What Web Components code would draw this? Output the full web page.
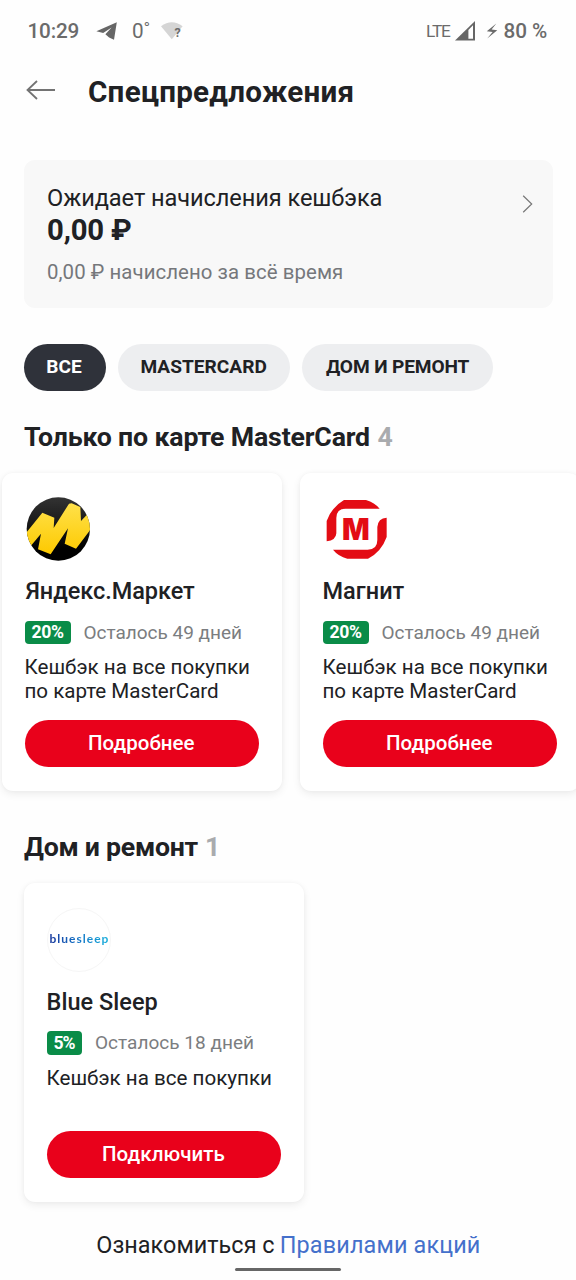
<!DOCTYPE html>
<html lang="ru">
<head>
<meta charset="utf-8">
<meta name="viewport" content="width=device-width">
<title>Спецпредложения</title>
<style>
html, body { margin: 0; background: #fefefe; }
body { width: 576px; height: 1280px; overflow: hidden; font-family: Roboto, "Noto Sans", sans-serif; color: #202124; }
</style>
</head>
<body>
<offers-page></offers-page>
<script>
const define = (name, html, connect) => {
  const tpl = document.createElement('template');
  tpl.innerHTML = html.trim();
  customElements.define(name, class extends HTMLElement {
    constructor() {
      super();
      this.attachShadow({ mode: 'open' }).append(tpl.content.cloneNode(true));
    }
    connectedCallback() { if (connect) connect(this, this.shadowRoot); }
  });
};

/* One line of text whose inked width is tracked to the "w" attribute. */
const pen = document.createElement('canvas').getContext('2d');
define('ui-text', `
<style>
:host { display: block; flex: none; }
span { display: block; width: max-content; white-space: pre; }
</style><span><slot></slot></span>`, (el, root) => {
  const w = +el.getAttribute('w'), size = +el.getAttribute('size');
  const weight = el.getAttribute('weight') || 400;
  const family = el.getAttribute('family') || 'Roboto';
  const text = el.textContent;
  el.style.font = `${weight} ${size}px/${el.getAttribute('lh') || 28}px "${family}", "Noto Sans", sans-serif`;
  if (el.hasAttribute('color')) el.style.color = el.getAttribute('color');
  pen.font = `${weight} ${size}px "${family}", "Noto Sans", sans-serif`;
  const m = pen.measureText(text);
  const ink = m.actualBoundingBoxLeft + m.actualBoundingBoxRight;
  el.style.width = w + 'px';
  el.style.letterSpacing = (text.length > 1 ? (w - .9 - ink) / (text.length - 1) : 0).toFixed(3) + 'px';
  root.querySelector('span').style.marginLeft = m.actualBoundingBoxLeft + .5 + 'px';
});

define('status-bar', `
<style>
:host { display: flex; justify-content: space-between; height: 62px; padding: 0 28.5px 0 28px; box-sizing: border-box; align-items: center; color: #6b6b6b; }
div { display: flex; align-items: center; }
svg { display: block; flex: none; }
.wifi { display: grid; margin-left: 10.5px; }
.wifi > * { grid-area: 1 / 1; }
.q { margin: 3px 0 0 13.5px; }
</style>
<div>
  <ui-text w="51" size="20.7" weight="500">10:29</ui-text>
  <svg style="margin-left:16.500px" width="21" height="20" viewBox="0 0 21 20"><path d="M.4 10.2 20.8 1.3 18 18.8l-4.9-2.3-3.7-3.2L15.600 6.500 7.200 11.900Z" fill="#666"/></svg>
  <ui-text style="margin-left:16px" w="17.500" size="20.7">0˚</ui-text>
  <div class="wifi">
    <svg width="22" height="18" viewBox="0 0 22 18"><path d="M0 4.300Q10.800-3.600 21.600 4.300L10.800 17.300Z" fill="#d5d5d5"/></svg>
    <ui-text class="q" w="6" size="12.500" weight="700" lh="14">?</ui-text>
  </div>
</div>
<div>
  <ui-text w="25" size="17.300" lh="27">LTE</ui-text>
  <svg style="margin-left:3px" width="20" height="20" viewBox="0 0 20 20"><path d="M0 19.500 20 0v19.500Z" fill="#666"/><path d="M13.400 9 18 4.300v13.400h-4.600Z" fill="#fefefe"/></svg>
  <svg style="margin:0 6px 0 11.500px" width="12" height="16" viewBox="0 0 12 16"><path d="M10.300.6 .8 8.200 6.600 8.900 1.200 15.400 11.300 7.200 5.600 6.500Z" fill="#6b6b6b"/></svg>
  <ui-text w="43.500" size="20.7" weight="500">80 %</ui-text>
</div>`);

define('page-header', `
<style>
:host { display: flex; align-items: center; height: 60px; padding-left: 26px; gap: 32.500px; }
svg { margin-top: -4px; }
</style>
<svg width="30" height="20" viewBox="0 0 30 20"><path d="M1.500 10H29M11 1 1.500 10 11 19" fill="none" stroke="#737373" stroke-width="1.800"/></svg>
<ui-text w="264.500" size="29.600" weight="700" lh="35">Спецпредложения</ui-text>`);

define('cashback-card', `
<style>
:host { display: flex; justify-content: space-between; margin: 38px 23px 0 23.500px; height: 147.500px; box-sizing: border-box; padding: 24px 20px 0 24px; border-radius: 11px; background: #f8f8f8; }
.all { margin-top: 10px; }
svg { margin-top: 11px; }
</style>
<div>
  <ui-text w="334.500" size="23.600">Ожидает начисления кешбэка</ui-text>
  <ui-text w="84" size="29.300" weight="700" lh="36">0,00 ₽</ui-text>
  <ui-text class="all" w="295" size="20.400" color="#75777b">0,00 ₽ начислено за всё время</ui-text>
</div>
<svg width="11" height="18" viewBox="0 0 11 18"><path d="M1.200 .8 9.700 9 1.200 17.200" fill="none" stroke="#777" stroke-width="1.200"/></svg>`);

define('filter-chip', `
<style>
:host { display: flex; align-items: center; height: 47px; padding: 0 23.300px; border-radius: 23.500px; background: #edeef0; }
:host([active]) { background: #2f323a; color: #fff; }
</style><slot></slot>`);

define('section-title', `
<style>:host { display: flex; height: 32px; margin-left: 23.500px; gap: 7.500px; }</style><slot></slot>`);

define('offer-card', `
<style>
:host { display: flex; flex-direction: column; align-items: flex-start; flex: none; width: 280.500px; height: 318.500px; padding: 24.500px 23.500px 0; box-sizing: border-box; border-radius: 11px; background: #fff; box-shadow: 0 3px 9px rgba(0,0,0,.07), 0 0 4px rgba(0,0,0,.03); }
::slotted([slot=logo]) { width: 64px; height: 64px; flex: none; }
.name { margin-top: 16px; }
.row { display: flex; align-items: center; height: 24px; margin-top: 15.500px; }
.badge { display: flex; align-items: center; justify-content: center; height: 23.500px; border-radius: 4px; background: #0a8c48; color: #fff; }
.left { margin-left: 13.500px; }
.desc { height: 48px; margin-top: 10.500px; }
.button { display: flex; align-items: center; justify-content: center; align-self: stretch; height: 47px; margin-top: 17.300px; border-radius: 23.500px; background: #e9011b; color: #fff; }
</style>
<slot name="logo"></slot>
<div class="name"><slot name="name"></slot></div>
<div class="row"><div class="badge"><slot name="rate"></slot></div><div class="left"><slot name="left"></slot></div></div>
<div class="desc"><slot></slot></div>
<div class="button"><slot name="action"></slot></div>`,
(el, root) => { root.querySelector('.badge').style.width = el.getAttribute('badge') + 'px'; });

define('logo-market', `
<style>:host { display: block; } svg { display: block; overflow: visible; }</style>
<svg width="64" height="64" viewBox="9 15 192 192">
<defs><linearGradient id="k" x2="0" y2="1"><stop stop-color="#333"/><stop offset=".8" stop-color="#000"/></linearGradient>
<linearGradient id="y" x2="0" y2="1"><stop stop-color="#ffe14a"/><stop offset="1" stop-color="#fdc900"/></linearGradient>
<clipPath id="c"><circle cx="109" cy="111" r="95"/></clipPath></defs>
<circle cx="109" cy="111" r="95" fill="url(#k)"/>
<path clip-path="url(#c)" d="M8 128 61 62 97 77 95 108 141 35 149 34 175 45 177 87 212 50V104L162 170 128 155 138 109 86 187 48 172 57 125 18 172Z" fill="url(#y)"/>
</svg>`);

define('logo-magnit', `
<style>:host { display: block; } svg { display: block; overflow: visible; }</style>
<svg width="64" height="64" viewBox="9 15 192 192">
<g fill="#e30c14"><path d="M20 148V87Q35 45 72 24H138Q164 32 179 50H77Q49 50 49 78V124Q48 145 20 148Z"/>
<path d="M200 77V135Q184 180 144 200H82Q55 193 39 173H143Q172 173 172 144V105Q174 78 200 77Z"/>
<text x="66" y="145" font-family="Inter, sans-serif" font-weight="900" font-size="91" textLength="83" lengthAdjust="spacingAndGlyphs">M</text></g>
</svg>`);

define('logo-bluesleep', `
<style>
:host { display: grid; place-items: center; box-sizing: border-box; border: 1px solid #f6f6f6; border-radius: 50%; }
ui-text { margin-top: -2px; background: linear-gradient(90deg, #16349a, #1670c4 45%, #18b0dc); -webkit-background-clip: text; background-clip: text; color: transparent; }
</style><ui-text w="60" size="12" lh="18" weight="700" family="Lato">bluesleep</ui-text>`);

define('page-footer', `
<style>
:host { display: flex; flex-direction: column; align-items: center; }
div { display: flex; gap: 6.500px; }
i { display: block; width: 106px; height: 3.500px; border-radius: 2px; background: #666; margin-top: 8.500px; }
</style>
<div><ui-text w="178" size="23.400">Ознакомиться с</ui-text><ui-text w="198" size="23.400" color="#4470cb">Правилами акций</ui-text></div><i></i>`);

define('offers-page', `
<style>
:host { display: block; width: 576px; height: 1280px; overflow: hidden; }
.chips { display: flex; gap: 12px; margin: 36px 0 0 23.500px; }
.cards { display: flex; gap: 17.500px; margin: 19.500px 0 0 1.500px; }
.home { margin: 20px 0 0 23.500px; }
</style>
<status-bar></status-bar>
<page-header></page-header>
<cashback-card></cashback-card>
<div class="chips">
  <filter-chip active><ui-text w="35.500" size="19.100" weight="700">ВСЕ</ui-text></filter-chip>
  <filter-chip><ui-text w="126" size="19.100" weight="700">MASTERCARD</ui-text></filter-chip>
  <filter-chip><ui-text w="144.500" size="19.100" weight="700">ДОМ И РЕМОНТ</ui-text></filter-chip>
</div>
<section-title style="margin-top:30.500px"><ui-text w="346" size="26.700" weight="700" lh="32">Только по карте MasterCard</ui-text><ui-text w="14" size="26.700" weight="700" lh="32" color="#a9abae">4</ui-text></section-title>
<div class="cards">
  <offer-card badge="45.500">
    <logo-market slot="logo"></logo-market>
    <ui-text slot="name" w="170.500" size="23.500" weight="500">Яндекс.Маркет</ui-text>
    <ui-text slot="rate" w="33.500" size="17.600" weight="700" lh="23">20%</ui-text>
    <ui-text slot="left" w="157.500" size="19" lh="24" color="#7b7d80">Осталось 49 дней</ui-text>
    <ui-text w="224.500" size="20.600" lh="24">Кешбэк на все покупки</ui-text>
    <ui-text w="193.500" size="20.600" lh="24">по карте MasterCard</ui-text>
    <ui-text slot="action" w="106.500" size="20.500" weight="500" lh="27">Подробнее</ui-text>
  </offer-card>
  <offer-card badge="45.500">
    <logo-magnit slot="logo"></logo-magnit>
    <ui-text slot="name" w="82" size="23.500" weight="500">Магнит</ui-text>
    <ui-text slot="rate" w="33.500" size="17.600" weight="700" lh="23">20%</ui-text>
    <ui-text slot="left" w="157.500" size="19" lh="24" color="#7b7d80">Осталось 49 дней</ui-text>
    <ui-text w="224.500" size="20.600" lh="24">Кешбэк на все покупки</ui-text>
    <ui-text w="193.500" size="20.600" lh="24">по карте MasterCard</ui-text>
    <ui-text slot="action" w="106.500" size="20.500" weight="500" lh="27">Подробнее</ui-text>
  </offer-card>
</div>
<section-title style="margin-top:40px"><ui-text w="175.500" size="26.700" weight="700" lh="32">Дом и ремонт</ui-text><ui-text w="10" size="26.700" weight="700" lh="32" color="#a9abae">1</ui-text></section-title>
<div class="cards home">
  <offer-card badge="35">
    <logo-bluesleep slot="logo"></logo-bluesleep>
    <ui-text slot="name" w="111" size="23.500" weight="500">Blue Sleep</ui-text>
    <ui-text slot="rate" w="23" size="17.600" weight="700" lh="23">5%</ui-text>
    <ui-text slot="left" w="158" size="19" lh="24" color="#7b7d80">Осталось 18 дней</ui-text>
    <ui-text w="224.500" size="20.600" lh="24">Кешбэк на все покупки</ui-text>
    <ui-text slot="action" w="122.500" size="20.500" weight="500" lh="27">Подключить</ui-text>
  </offer-card>
</div>
<page-footer style="margin-top:29.500px"></page-footer>`);
</script>
</body>
</html>
